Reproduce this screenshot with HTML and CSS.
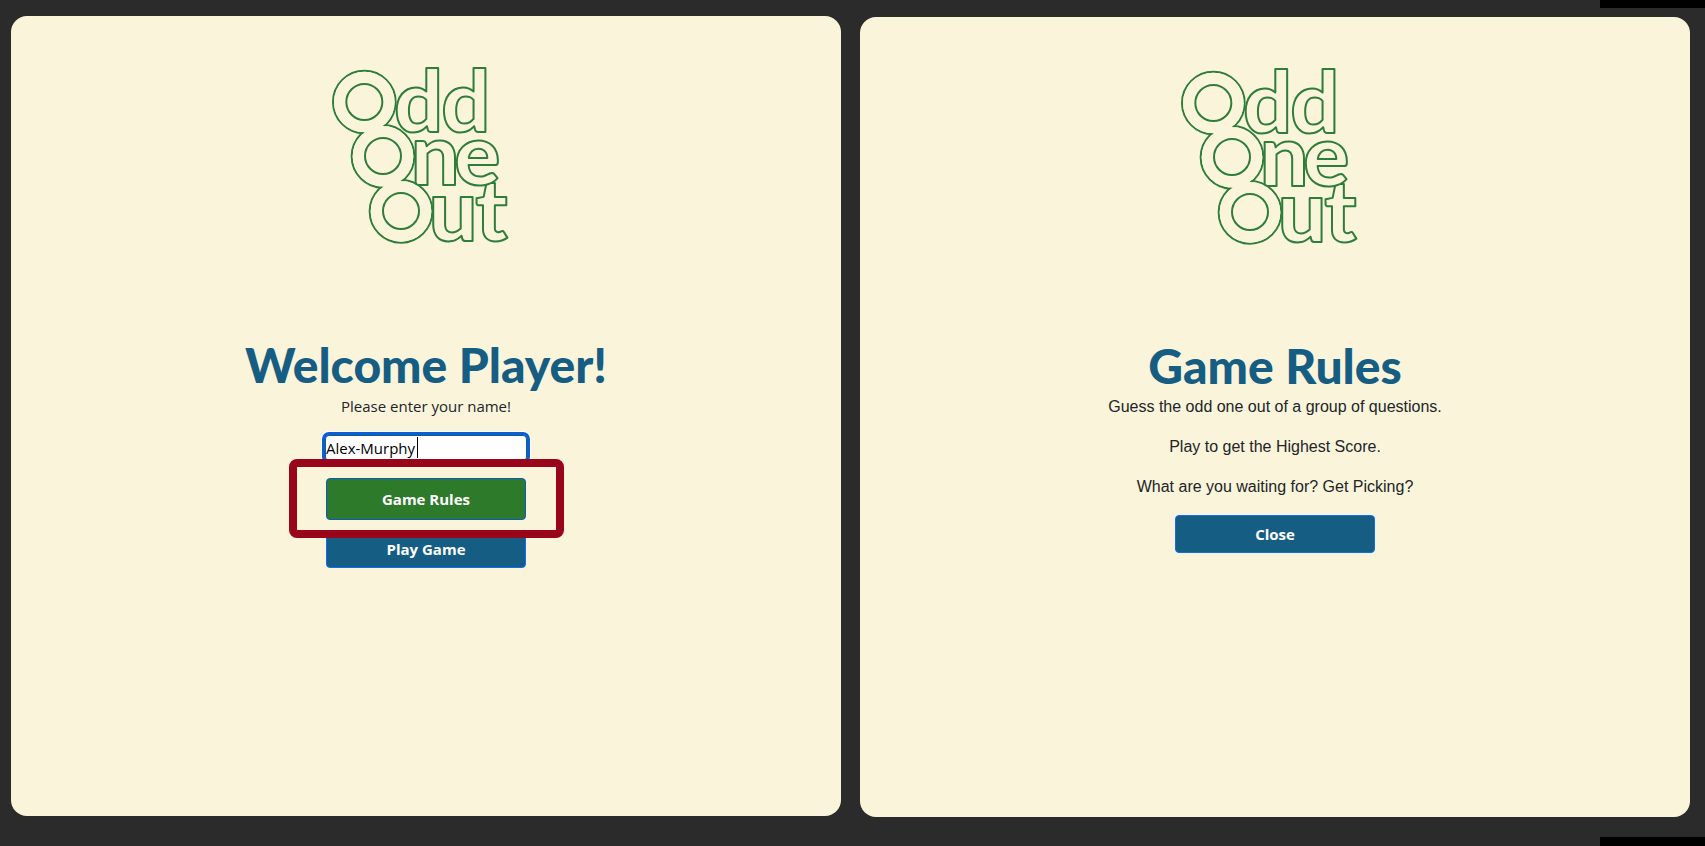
FILE: index.html
```html
<!DOCTYPE html>
<html lang="en">
<head>
<meta charset="utf-8">
<title>Odd One Out</title>
<link rel="stylesheet" href="styles.css">
</head>
<body>
<svg class="defs" aria-hidden="true">
  <symbol id="logo" viewBox="18 0 600 600">
    <g class="letters">
      <text x="222" y="232">d</text><text x="364" y="232">d</text>
      <text x="466" y="558">t</text><text x="326" y="558">u</text>
      <text x="272" y="390">n</text><text x="403" y="390">e</text>
    </g>
    <g class="ring-line">
      <circle cx="133" cy="141" r="94"/><circle cx="189" cy="304" r="94"/><circle cx="243" cy="469" r="94"/>
    </g>
    <g class="ring-fill">
      <circle cx="133" cy="141" r="91"/><circle cx="189" cy="304" r="91"/><circle cx="243" cy="469" r="91"/>
    </g>
    <g class="ring-line">
      <circle cx="133" cy="141" r="54"/><circle cx="189" cy="303" r="54"/><circle cx="243" cy="468" r="54"/>
    </g>
  </symbol>
</svg>
<div class="corner corner-top"></div>
<div class="corner corner-bottom"></div>
<main class="screens">
  <section class="panel">
    <svg class="logo" role="img" aria-label="Odd One Out"><use href="#logo"/></svg>
    <h1 class="title">Welcome Player!</h1>
    <label class="prompt" for="player">Please enter your name!</label>
    <div class="field">
      <input class="name" id="player" type="text" value="Alex-Murphy">
      <span class="caret"></span>
    </div>
    <div class="actions">
      <button class="btn btn-rules" type="button">Game Rules</button>
      <button class="btn" type="button">Play Game</button>
      <div class="highlight"></div>
    </div>
  </section>
  <section class="panel panel-rules">
    <svg class="logo" role="img" aria-label="Odd One Out"><use href="#logo"/></svg>
    <h1 class="title">Game Rules</h1>
    <p class="rule">Guess the odd one out of a group of questions.</p>
    <p class="rule">Play to get the Highest Score.</p>
    <p class="rule">What are you waiting for? Get Picking?</p>
    <button class="btn" type="button">Close</button>
  </section>
</main>
</body>
</html>
```
FILE: styles.css
```css
* { box-sizing: border-box; }
body {
  margin: 0;
  background: #2b2b2b;
  color: #212529;
  font-family: "Open Sans", "Noto Sans", sans-serif;
  font-size: 15px;
  line-height: 24px;
}
.defs { position: absolute; width: 0; height: 0; }
.screens {
  display: flex;
  gap: 19px;
  min-height: 100vh;
  padding: 16px 15px 30px 11px;
}
.panel {
  flex: 1;
  display: flex;
  flex-direction: column;
  align-items: center;
  padding: 39px 16px;
  border-radius: 16px;
  background: #faf4db;
}
.panel-rules { margin: 1px 0 -1px; }
.logo { width: 200px; height: 200px; margin-bottom: 81px; }
.ring-line { fill: none; stroke: #2f7d3b; stroke-width: 6px; }
.ring-fill { fill: #faf4db; }
.letters {
  fill: #faf4db;
  stroke: #2f7d3b;
  stroke-width: 6px;
  stroke-linejoin: round;
  font: 900 258px Lato, sans-serif;
}
.title {
  margin: 0;
  color: #165d83;
  font: 900 48px/58px Lato, sans-serif;
}
.rule {
  margin: 0 0 16px;
  font-family: "Liberation Sans", Arial, sans-serif;
  font-size: 16px;
}
.field { position: relative; margin: 17px 0; }
.name {
  display: block;
  width: 202px;
  height: 26px;
  padding: 0;
  border: 1px solid #165d83;
  border-radius: 4px;
  box-shadow: 0 0 0 3px #0a5fd6, 0 0 0 4px #fff;
  background: #fff;
  color: #000;
  font: inherit;
}
.caret {
  position: absolute;
  left: 92px;
  top: 2px;
  width: 1px;
  height: 21px;
  background: #000;
}
.actions { position: relative; display: grid; gap: 10px; }
.btn {
  width: 200px;
  height: 38px;
  padding: 0;
  border: 1px solid #0d6efd;
  border-radius: 4px;
  background: #165d83;
  color: #fff;
  font: bold 15px/24px "Open Sans", "Noto Sans", sans-serif;
}
.btn-rules { height: 42px; border-color: #0a58ca; background: #2e7a2b; }
.highlight {
  position: absolute;
  inset: -19px -38px 30px -37px;
  border: 8px solid #990519;
  border-radius: 8px;
}
.corner { position: absolute; right: 0; width: 105px; background: #000; }
.corner-top { top: 0; height: 8px; }
.corner-bottom { bottom: 0; height: 9px; }
```
